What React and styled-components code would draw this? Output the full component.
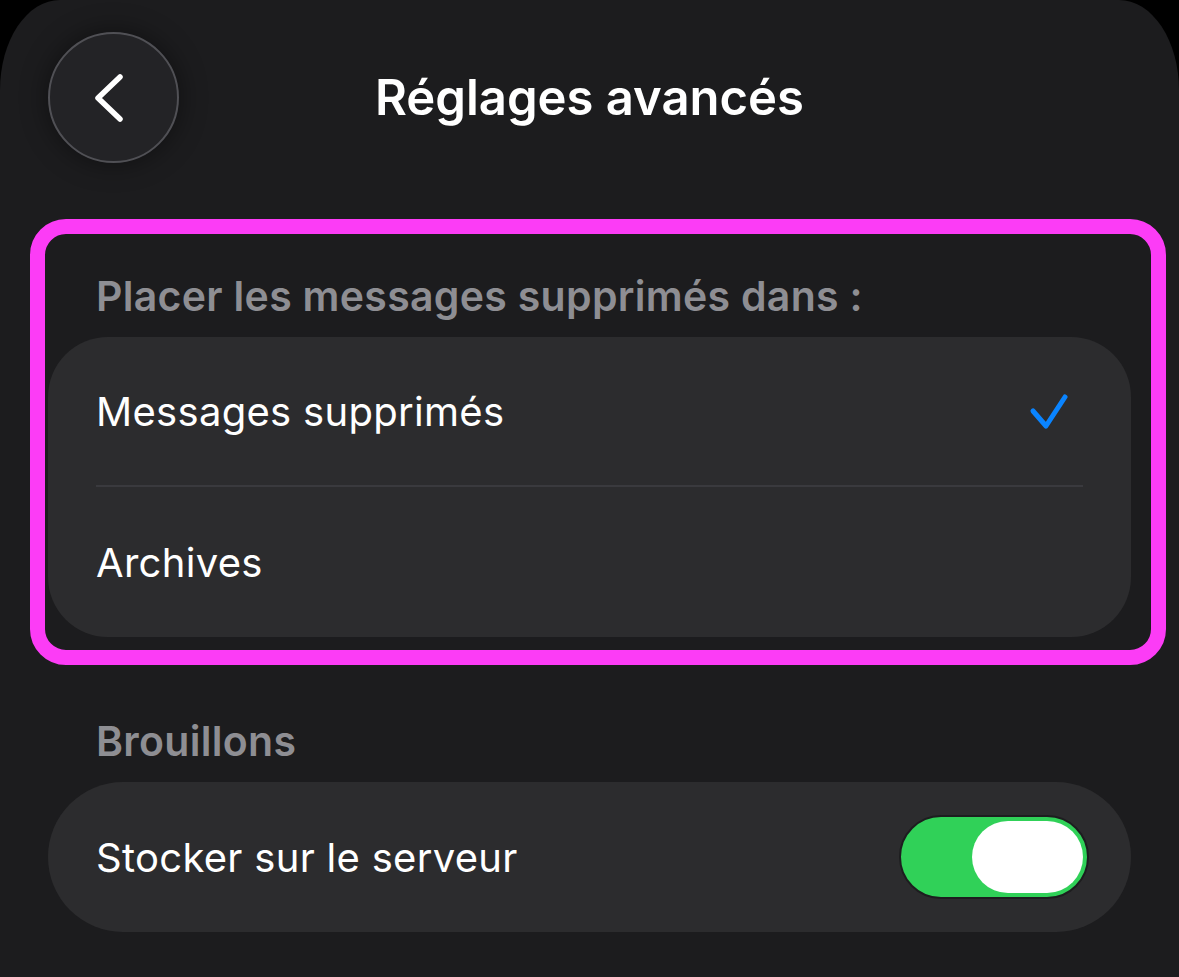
import React from "react";
import styled, { createGlobalStyle } from "styled-components";

const Global = createGlobalStyle`
  html, body {
    margin: 0;
    padding: 0;
    background: #000;
  }
  body {
    font-family: Inter, "Noto Sans", "Liberation Sans", sans-serif;
    -webkit-font-smoothing: antialiased;
  }
`;

const Screen = styled.div`
  min-height: 977px;
  background: #1c1c1e;
  border-radius: 60px 60px 0 0 / 90px 90px 0 0;
  overflow: hidden;
  box-sizing: border-box;
  padding-bottom: 45px;
`;

const Header = styled.header`
  display: grid;
  grid-template-columns: 131px 1fr 131px;
  align-items: center;
  padding: 32px 48px 0;
`;

const BackButton = styled.button`
  width: 131px;
  height: 131px;
  border-radius: 50%;
  border: 2px solid #505055;
  background: #232326;
  box-shadow: 0 0 28px rgba(0, 0, 0, 0.45);
  display: flex;
  align-items: center;
  justify-content: center;
  padding: 0 2px 0 0;
  cursor: pointer;
`;

const Title = styled.h1`
  margin: 0;
  text-align: center;
  color: #fff;
  font-size: 49px;
  font-weight: 600;
  letter-spacing: 0;
`;

const Highlight = styled.section`
  margin: 56px 0 0 30px;
  width: 1136px;
  box-sizing: border-box;
  border: 15px solid #fc3cf6;
  border-radius: 36px;
  padding: 39px 20px 13px 3px;
`;

const SectionLabel = styled.div`
  color: #8e8e93;
  font-size: 41px;
  font-weight: 600;
  letter-spacing: 0.3px;
  line-height: 46px;
  padding-left: 48px;
  margin-bottom: ${(p) => p.$gap || 20}px;
`;

const Card = styled.div`
  background: #2c2c2e;
  border-radius: ${(p) => p.$radius || 60}px;
  overflow: hidden;
`;

const Row = styled.div`
  height: ${(p) => p.$height || 150}px;
  display: flex;
  align-items: center;
  justify-content: space-between;
  padding: 0 48px;
  box-sizing: border-box;
`;

const RowText = styled.span`
  color: #fff;
  font-size: 40px;
  font-weight: 400;
  letter-spacing: 0.3px;
`;

const Section = styled.section`
  margin: 53px 48px 0 48px;
`;

const Switch = styled.div`
  width: 190px;
  height: 84px;
  box-sizing: border-box;
  border-radius: 42px;
  background: #30d158;
  border: 2px solid #1d1d1f;
  display: flex;
  align-items: center;
  justify-content: flex-end;
  padding-right: 4px;
  margin-right: -6px;
`;

const Thumb = styled.div`
  width: 111px;
  height: 72px;
  border-radius: 36px;
  background: #fff;
`;

const Divider = styled.div`
  height: 2px;
  background: #3a3a3e;
  margin: 0 48px;
`;

const CheckMark = styled.svg`
  margin-right: 12px;
`;

const Chevron = () => (
  <svg width="40" height="60" viewBox="0 0 40 60" fill="none">
    <path
      d="M27 9 L5 30 L27 51"
      stroke="#fff"
      strokeWidth="5.5"
      strokeLinecap="round"
      strokeLinejoin="round"
    />
  </svg>
);

const Check = () => (
  <CheckMark width="44" height="44" viewBox="0 0 44 44" fill="none">
    <path
      d="M6 22 L19 37 L38 8"
      stroke="#0a84ff"
      strokeWidth="5"
      strokeLinecap="round"
      strokeLinejoin="round"
    />
  </CheckMark>
);

export default function App() {
  return (
    <>
      <Global />
      <Screen>
        <Header>
          <BackButton aria-label="Retour">
            <Chevron />
          </BackButton>
          <Title>Réglages avancés</Title>
          <span />
        </Header>

        <Highlight>
          <SectionLabel $gap={18}>Placer les messages supprimés dans :</SectionLabel>
          <Card $radius={60}>
            <Row $height={148}>
              <RowText>Messages supprimés</RowText>
              <Check />
            </Row>
            <Divider />
            <Row $height={150}>
              <RowText>Archives</RowText>
            </Row>
          </Card>
        </Highlight>

        <Section>
          <SectionLabel $gap={18}>Brouillons</SectionLabel>
          <Card $radius={75}>
            <Row $height={150}>
              <RowText>Stocker sur le serveur</RowText>
              <Switch>
                <Thumb />
              </Switch>
            </Row>
          </Card>
        </Section>
      </Screen>
    </>
  );
}
